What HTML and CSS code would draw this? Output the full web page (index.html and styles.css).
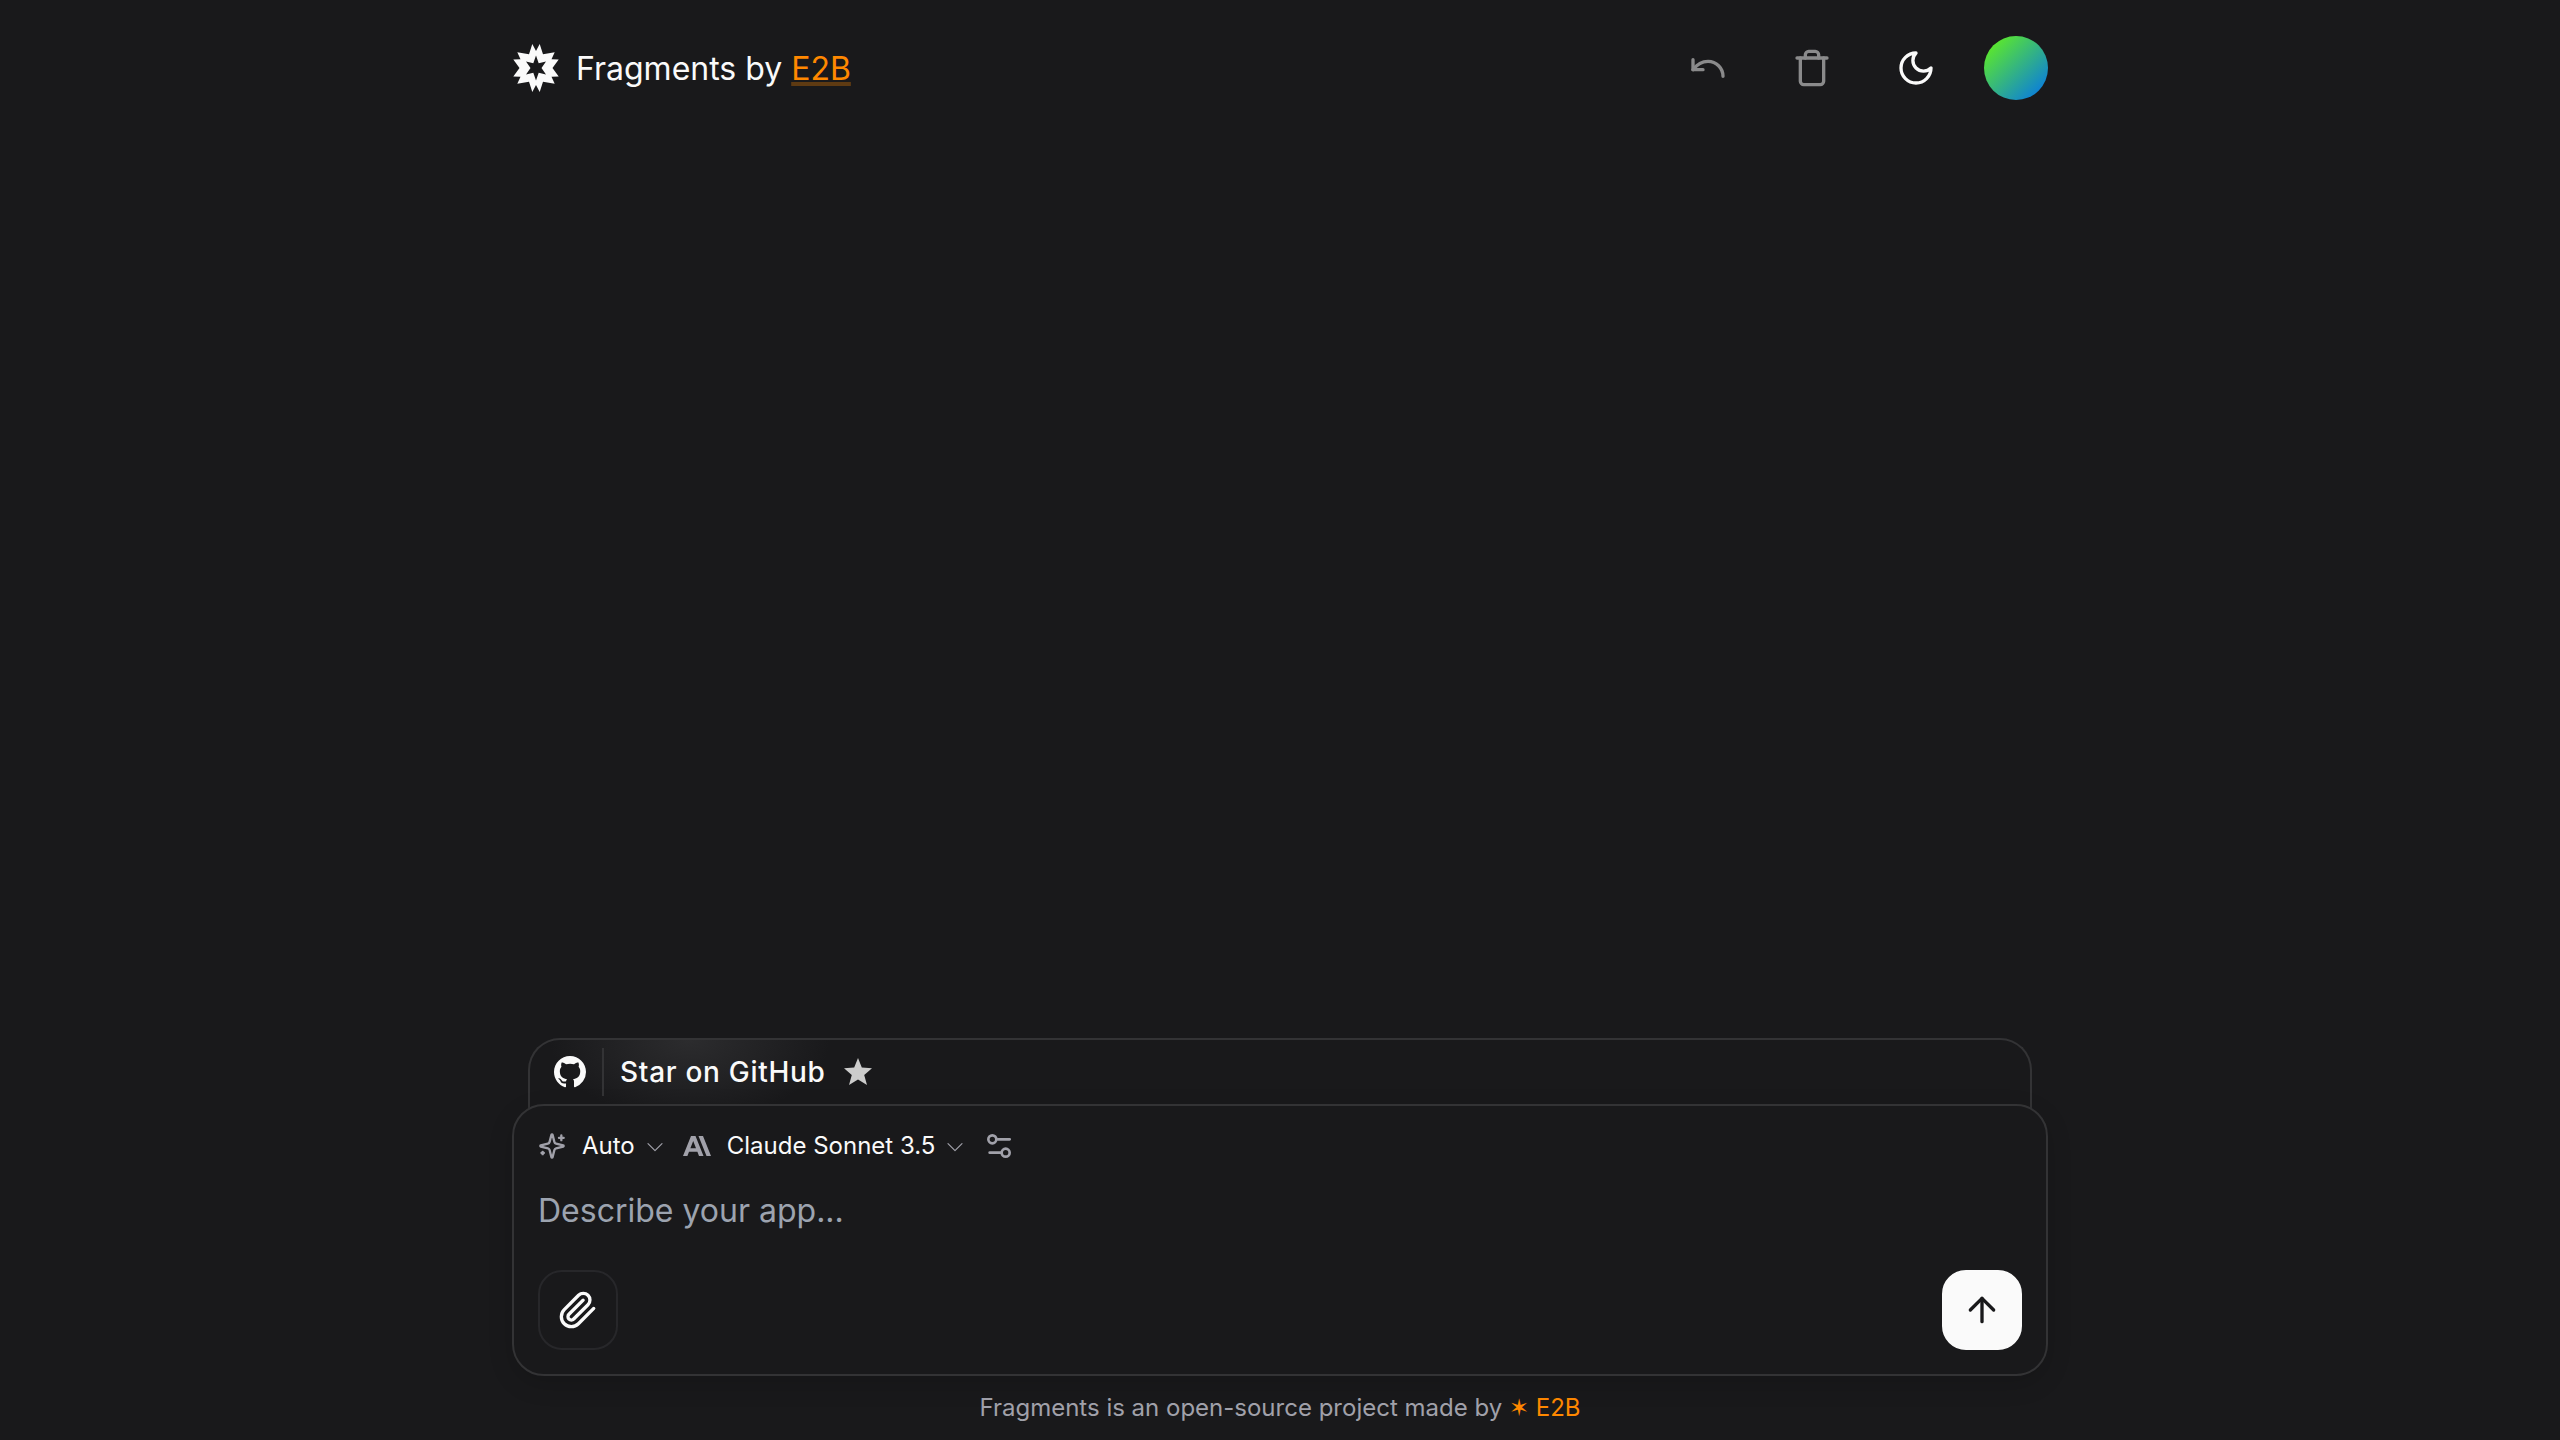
FILE: index.html
```html
<!DOCTYPE html>
<html lang="en">
<head>
<meta charset="utf-8">
<meta name="viewport" content="width=device-width, initial-scale=1">
<title>Fragments by E2B</title>
<link rel="stylesheet" href="styles.css">
</head>
<body>
<div class="app">
  <header class="nav">
    <div class="brand">
      <svg class="brand-logo" viewBox="0 0 48 48" aria-hidden="true">
        <path fill="currentColor" fill-rule="evenodd" d="M20.300 0 L24 7 L27.700 0 L31 10.300 L42.700 8.300 L39.500 15.300 L46.700 15.600 L40.500 24 L46.700 32.400 L39.500 32.700 L42.700 39.700 L31 37.700 L27.700 48 L24 41 L20.300 48 L17 37.700 L5.300 39.700 L8.500 32.700 L1.300 32.400 L7.500 24 L1.300 15.600 L8.500 15.300 L5.300 8.300 L17 10.300 Z M24 11.500 L21.300 19.300 L14 17.500 L18.500 24 L14 30.500 L21.300 28.700 L24 36.500 L26.700 28.700 L34 30.500 L29.500 24 L34 17.500 L26.700 19.300 Z"/>
      </svg>
      <h1 class="brand-title">Fragments by <a class="brand-link" href="#">E2B</a></h1>
    </div>
    <div class="nav-actions">
      <button class="icon-button" type="button" aria-label="Undo" disabled>
        <svg class="icon icon-large" viewBox="0 0 24 24"><path d="M3 7v6h6"/><path d="M3 13C6 9 9 8 12 8a9 9 0 0 1 9 9"/></svg>
      </button>
      <button class="icon-button" type="button" aria-label="Clear chat" disabled>
        <svg class="icon icon-large" viewBox="0 0 24 24"><path d="M3 6h18"/><path d="M19 6v14c0 1-1 2-2 2H7c-1 0-2-1-2-2V6"/><path d="M8 6V4c0-1 1-2 2-2h4c1 0 2 1 2 2v2"/></svg>
      </button>
      <button class="icon-button" type="button" aria-label="Toggle theme">
        <svg class="icon icon-large" viewBox="0 0 24 24"><path d="M12 3a6 6 0 0 0 9 9 9 9 0 1 1-9-9Z"/></svg>
      </button>
      <button class="avatar" type="button" aria-label="Account"></button>
    </div>
  </header>

  <main class="chat">
    <form class="composer">
      <a class="banner" href="#">
        <svg class="banner-github" viewBox="0 0 16 16" aria-hidden="true"><path fill="currentColor" d="M8 0C3.580 0 0 3.580 0 8c0 3.540 2.290 6.530 5.470 7.590.4.070.55-.17.55-.38 0-.19-.01-.82-.01-1.490-2.010.37-2.530-.49-2.690-.94-.09-.23-.48-.94-.82-1.130-.28-.15-.68-.52-.01-.53.63-.01 1.080.58 1.230.82.72 1.210 1.870.87 2.330.66.07-.52.28-.87.51-1.070-1.780-.2-3.640-.89-3.640-3.950 0-.87.31-1.590.82-2.150-.08-.2-.36-1.020.08-2.120 0 0 .67-.21 2.200.82.64-.18 1.320-.27 2-.27s1.360.09 2 .27c1.530-1.040 2.200-.82 2.200-.82.44 1.100.16 1.920.08 2.120.51.56.82 1.270.82 2.150 0 3.070-1.870 3.750-3.650 3.950.29.25.54.73.54 1.480 0 1.070-.01 1.930-.01 2.200 0 .21.15.46.55.38A8.010 8.010 0 0 0 16 8c0-4.420-3.580-8-8-8Z"/></svg>
        <span class="banner-divider"></span>
        <span class="banner-text">Star on GitHub</span>
        <svg class="banner-star" viewBox="0 0 28 28" aria-hidden="true"><path fill="currentColor" d="M14 0l3.800 9.500L28 10.300l-7.800 6.600L23 27l-9-5.500L5 27l2.800-10.100L0 10.300l10.200-.8Z"/></svg>
      </a>
      <div class="panel">
        <div class="pickers">
          <button class="picker" type="button">
            <svg class="icon icon-small muted" viewBox="0 0 24 24"><path d="M9.937 15.500A2 2 0 0 0 8.500 14.063l-6.135-1.582a.5.5 0 0 1 0-.962L8.500 9.936A2 2 0 0 0 9.937 8.500l1.582-6.135a.5.5 0 0 1 .963 0L14.063 8.500A2 2 0 0 0 15.500 9.937l6.135 1.581a.5.5 0 0 1 0 .964L15.500 14.063a2 2 0 0 0-1.437 1.437l-1.582 6.135a.5.5 0 0 1-.963 0z"/><path d="M20 3v4M22 5h-4M4 17v2M5 18H3"/></svg>
            <span class="picker-label">Auto</span>
            <svg class="icon chevron" viewBox="0 0 24 24"><path d="m6 10 6 6 6-6"/></svg>
          </button>
          <button class="picker" type="button">
            <svg class="icon-small muted" viewBox="0 0 28 28"><path fill="currentColor" fill-rule="evenodd" d="M8 4h4.500l8 20H16l-1.600-4.200H6L4.400 24H0ZM13 16.300l-2.800-7.200-2.800 7.200Z M15.500 4H20l8 20h-4.500Z"/></svg>
            <span class="picker-label">Claude Sonnet 3.5</span>
            <svg class="icon chevron" viewBox="0 0 24 24"><path d="m6 10 6 6 6-6"/></svg>
          </button>
          <button class="picker" type="button" aria-label="Model settings">
            <svg class="icon icon-medium muted" viewBox="0 0 24 24"><path d="M20 7h-9"/><path d="M14 17H5"/><circle cx="17" cy="17" r="3"/><circle cx="7" cy="7" r="3"/></svg>
          </button>
        </div>
        <textarea class="prompt" rows="1" aria-label="Describe your app" placeholder="Describe your app..."></textarea>
        <div class="panel-actions">
          <button class="square-button" type="button" aria-label="Attach files">
            <svg class="icon icon-large" viewBox="0 0 24 24"><path d="m21.440 11.050-9.190 9.190a6 6 0 0 1-8.490-8.490l8.570-8.570A4 4 0 1 1 18 8.840l-8.590 8.570a2 2 0 0 1-2.830-2.830l8.490-8.480"/></svg>
          </button>
          <button class="square-button send" type="submit" aria-label="Send">
            <svg class="icon icon-large" viewBox="0 0 24 24"><path d="m5 12 7-7 7 7"/><path d="M12 19V5"/></svg>
          </button>
        </div>
      </div>
    </form>
    <p class="credit">Fragments is an open-source project made by <a class="credit-link" href="#">✶ E2B</a></p>
  </main>
</div>
</body>
</html>
```
FILE: styles.css
```css
:root {
  --background: #19191b;
  --foreground: #fafafa;
  --muted: #a1a1aa;
  --border: #333335;
  --accent: #ff8800;
}

* {
  box-sizing: border-box;
}

body {
  margin: 0;
  background: var(--background);
  color: var(--foreground);
  font-family: Inter, "Liberation Sans", "DejaVu Sans", sans-serif;
}

button {
  padding: 0;
  border: 0;
  background: none;
  color: inherit;
  font: inherit;
  cursor: pointer;
}

a {
  color: inherit;
  text-decoration: none;
}

.app {
  display: flex;
  flex-direction: column;
  min-height: 100vh;
  width: 100%;
  max-width: 1536px;
  margin: 0 auto;
}

.nav {
  display: flex;
  align-items: center;
  justify-content: space-between;
  padding-top: 32px;
}

.brand,
.nav-actions {
  display: flex;
  align-items: center;
}

.brand {
  gap: 16px;
}

.nav-actions {
  gap: 32px;
}

.brand-logo {
  width: 48px;
  height: 48px;
}

.brand-title {
  margin: 0;
  padding-top: 2px;
  font-size: 32px;
  font-weight: 400;
  line-height: 48px;
}

.brand-link {
  color: var(--accent);
  text-decoration: underline rgba(255, 136, 0, 0.3);
  text-decoration-thickness: 4px;
  text-decoration-skip-ink: none;
  text-underline-offset: 2px;
}

.icon {
  display: block;
  fill: none;
  stroke: currentColor;
  stroke-width: 2;
  stroke-linecap: round;
  stroke-linejoin: round;
}

.icon-large {
  width: 40px;
  height: 40px;
}

.icon-medium {
  width: 32px;
  height: 32px;
}

.icon-small {
  width: 28px;
  height: 28px;
}

.icon-button {
  display: grid;
  place-items: center;
  width: 72px;
  height: 72px;
}

.icon-button:disabled {
  opacity: 0.5;
}

.avatar {
  width: 64px;
  height: 64px;
  border-radius: 50%;
  background: linear-gradient(135deg, #68f810, #0070f3);
}

.chat {
  display: flex;
  flex: 1;
  flex-direction: column;
  justify-content: flex-end;
}

.banner {
  display: flex;
  align-items: center;
  height: 100px;
  margin: 0 16px -34px;
  padding: 0 24px 34px;
  border: 2px solid var(--border);
  border-bottom: 0;
  border-radius: 32px 32px 0 0;
  background: radial-gradient(140px 80px at 160px 0, #2c2c2e, transparent);
}

.banner-github {
  width: 32px;
  height: 32px;
}

.banner-divider {
  width: 2px;
  height: 48px;
  margin: 0 16px;
  background: var(--border);
}

.banner-text {
  font-size: 28px;
  font-weight: 500;
  line-height: 40px;
  letter-spacing: 0.025em;
}

.banner-star {
  width: 28px;
  height: 28px;
  margin-left: 18px;
  color: #cccccc;
}

.panel {
  position: relative;
  padding: 24px;
  border: 2px solid var(--border);
  border-radius: 32px;
  background: var(--background);
  box-shadow: 0 8px 24px rgba(0, 0, 0, 0.15);
}

.pickers {
  display: flex;
  align-items: center;
  gap: 14px;
  height: 32px;
}

.picker {
  display: flex;
  align-items: center;
}

.muted {
  color: var(--muted);
}

.picker-label {
  margin: 0 6px 0 16px;
  font-size: 24px;
  line-height: 32px;
}

.chevron {
  width: 28px;
  height: 28px;
  stroke-width: 1;
  color: var(--muted);
}

.prompt {
  display: block;
  width: 100%;
  height: 48px;
  margin: 25px 0 35px;
  padding: 0;
  border: 0;
  outline: 0;
  resize: none;
  overflow: hidden;
  background: none;
  color: inherit;
  font: inherit;
  font-size: 32px;
  line-height: 48px;
}

.prompt::placeholder {
  color: #9ca3af;
}

.panel-actions {
  display: flex;
  justify-content: space-between;
}

.square-button {
  display: grid;
  place-items: center;
  width: 80px;
  height: 80px;
  border: 2px solid #27272a;
  border-radius: 24px;
}

.send {
  border-color: var(--foreground);
  background: var(--foreground);
  color: var(--background);
}

.credit {
  margin: 16px 0;
  color: var(--muted);
  font-size: 24px;
  line-height: 32px;
  text-align: center;
}

.credit-link {
  color: var(--accent);
}
```
